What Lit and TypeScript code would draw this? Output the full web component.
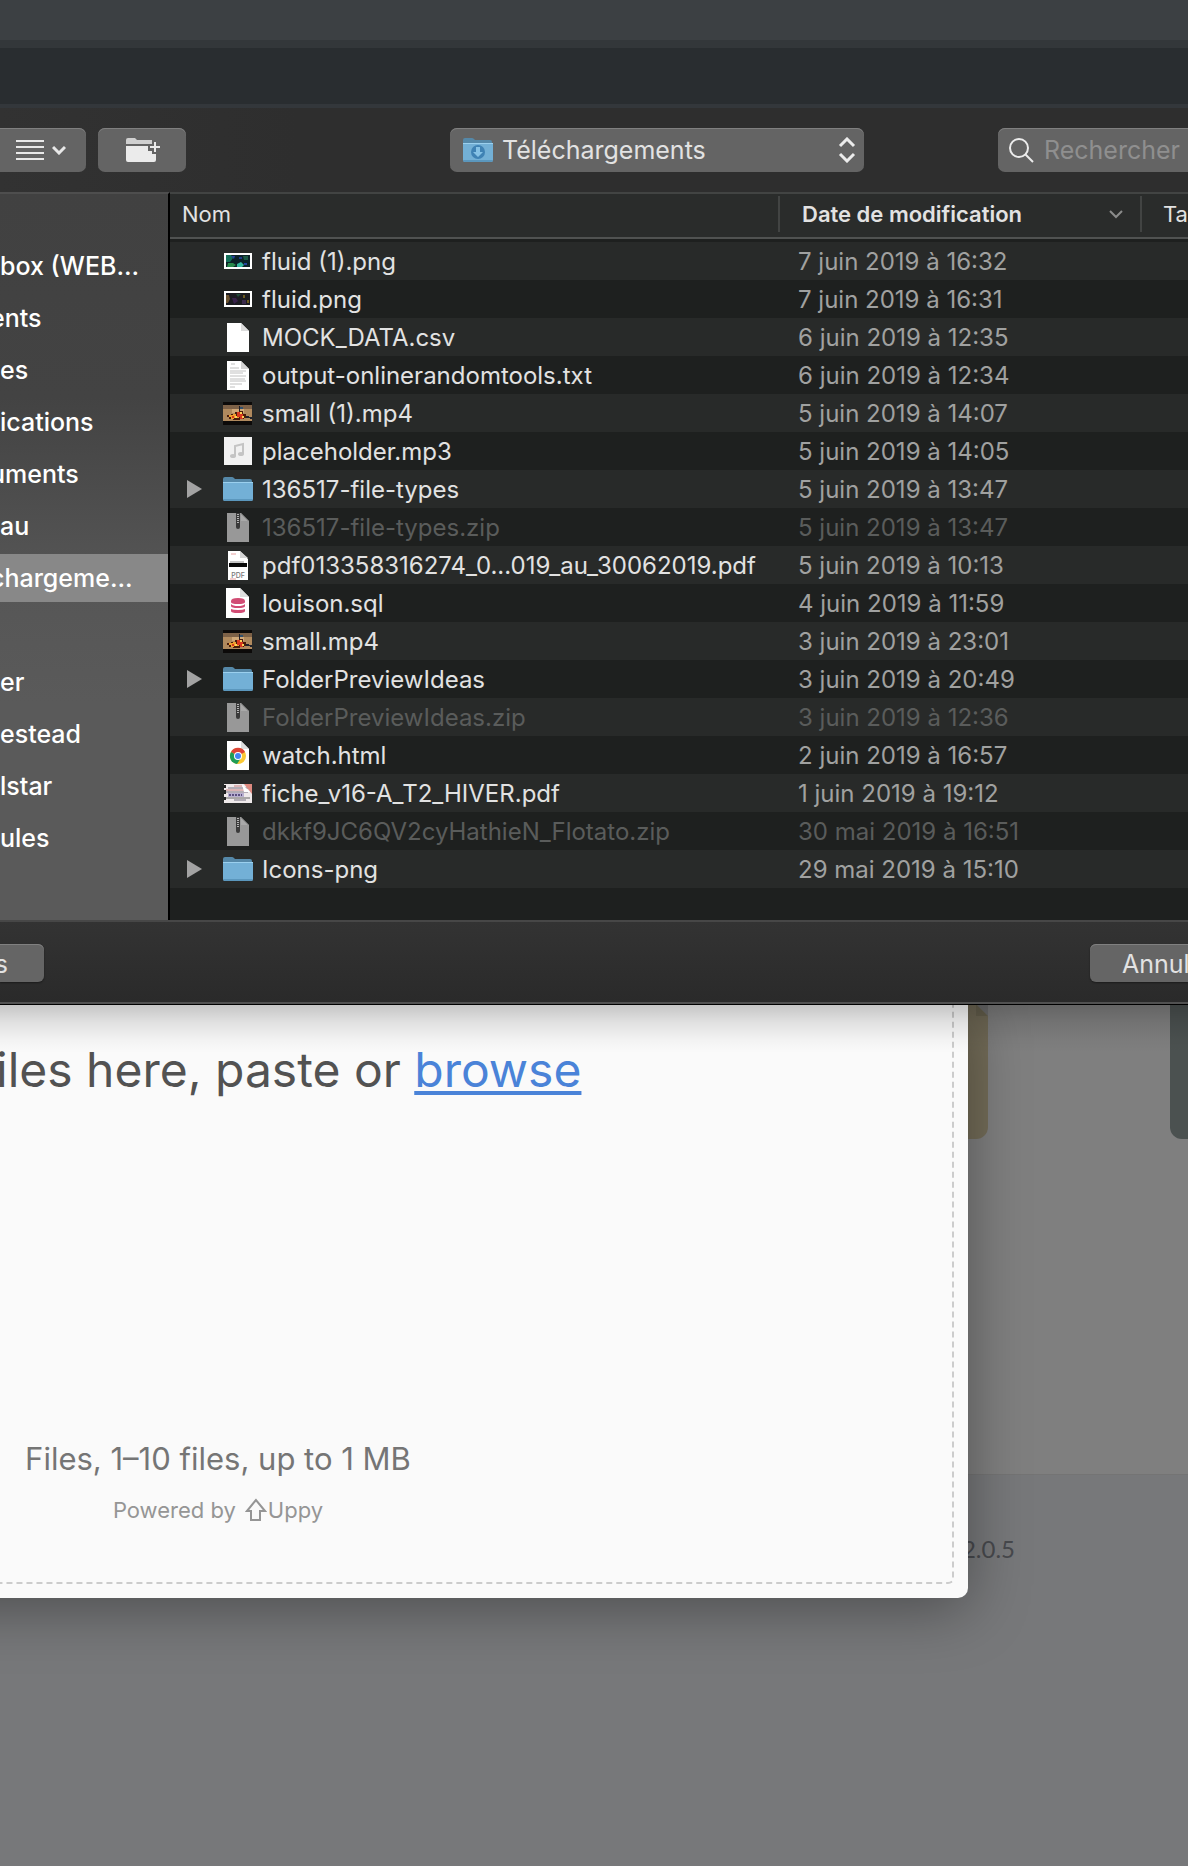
import { LitElement, html, css, svg } from "lit";
import { customElement } from "lit/decorators.js";
import { classMap } from "lit/directives/class-map.js";

type Kind = "fluidA" | "fluidB" | "blank" | "text" | "video" | "audio" | "folder" | "zip" | "pdf" | "sql" | "html" | "scan";

interface Entry {
  kind: Kind;
  name: string;
  date: string;
}

interface Place {
  label: string;
  bleed?: boolean;
  current?: boolean;
}

const FILES: Entry[] = [
  { kind: "fluidA", name: "fluid (1).png", date: "7 juin 2019 à 16:32" },
  { kind: "fluidB", name: "fluid.png", date: "7 juin 2019 à 16:31" },
  { kind: "blank", name: "MOCK_DATA.csv", date: "6 juin 2019 à 12:35" },
  { kind: "text", name: "output-onlinerandomtools.txt", date: "6 juin 2019 à 12:34" },
  { kind: "video", name: "small (1).mp4", date: "5 juin 2019 à 14:07" },
  { kind: "audio", name: "placeholder.mp3", date: "5 juin 2019 à 14:05" },
  { kind: "folder", name: "136517-file-types", date: "5 juin 2019 à 13:47" },
  { kind: "zip", name: "136517-file-types.zip", date: "5 juin 2019 à 13:47" },
  { kind: "pdf", name: "pdf013358316274_0...019_au_30062019.pdf", date: "5 juin 2019 à 10:13" },
  { kind: "sql", name: "louison.sql", date: "4 juin 2019 à 11:59" },
  { kind: "video", name: "small.mp4", date: "3 juin 2019 à 23:01" },
  { kind: "folder", name: "FolderPreviewIdeas", date: "3 juin 2019 à 20:49" },
  { kind: "zip", name: "FolderPreviewIdeas.zip", date: "3 juin 2019 à 12:36" },
  { kind: "html", name: "watch.html", date: "2 juin 2019 à 16:57" },
  { kind: "scan", name: "fiche_v16-A_T2_HIVER.pdf", date: "1 juin 2019 à 19:12" },
  { kind: "zip", name: "dkkf9JC6QV2cyHathieN_Flotato.zip", date: "30 mai 2019 à 16:51" },
  { kind: "folder", name: "Icons-png", date: "29 mai 2019 à 15:10" },
];

const PLACES: Place[][] = [
  [
    { label: "box (WEB..." },
    { label: "ents", bleed: true },
    { label: "es" },
    { label: "ications" },
    { label: "uments", bleed: true },
    { label: "au" },
    { label: "chargeme...", bleed: true, current: true },
  ],
  [{ label: "er" }, { label: "estead" }, { label: "lstar" }, { label: "ules" }],
];

const page = (fill: string, flap: string) => svg`
  <path d="M5 2h14l8 8v21H5z" fill=${fill}/>
  <path d="M19 2v8h8z" fill=${flap}/>`;

const folderShape = svg`
  <path d="M1 7V6q0-2 2-2h7q1 0 2 1l1 1h15q2 0 2 2v3H1z" fill="#5588a8"/>
  <path d="M1 9h30v17q0 2-2 2H3q-2 0-2-2z" fill="#73b0d6"/>
  <path d="M1 9h30v1H1z" fill="#9bd0ee"/>
  <path d="M1 26h30q0 2-2 2H3q-2 0-2-2z" fill="#5b97bd"/>`;

const videoShape = svg`
  <path d="M1 5h29v23H1z" fill="#0c0a09"/>
  <path d="M1 8h29v16H1z" fill="#b08a5e"/>
  <path d="M1 8h29v4H1z" fill="#7d6147"/>
  <path d="M10 12h12v4H10z" fill="#d0a878"/>
  <path d="M5 18h4v-1h4v-2h4v-1h4v3h3v3h3v1h-5v1h-4v1h-7v-1H7v-2H5z" fill="#4a1c0c"/>
  <path d="M7 18h4v-1h3v2h3v2h-5v1H9v-2H7z" fill="#f0a030"/>
  <path d="M15 15h3v2h3v5h-3v-2h-3zM10 19h2v2h-2z" fill="#d9381e"/>
  <path d="M18 15h2v2h-2zM13 19h2v2h-2zM20 19h2v2h-2z" fill="#ffd257"/>
  <path d="M17 9h1v5h-1zM24 19h3v1h3v2h-2v-1h-4z" fill="#20222c"/>
  <path d="M18 10h3v2h-3z" fill="#31506e"/>`;

const ART: Record<Kind, unknown> = {
  folder: folderShape,
  video: videoShape,
  fluidA: svg`
    <path d="M2 8h28v16H2z" fill="#fff"/>
    <path d="M4 10h24v12H4z" fill="#0c2228"/>
    <path d="M4 10h5l2 3-3 4H4z" fill="#15705a"/>
    <path d="M6 18h5l3 2-3 2H5z" fill="#2a8a4c"/>
    <path d="M15 19l4-2 3 3-2 2h-5z" fill="#34b8a0"/>
    <path d="M9 11h4l-1 3zM22 18h3v2h-3z" fill="#2444a0"/>
    <path d="M21 11h5v4h-4z" fill="#1d5a46"/>
    <path d="M17 12h3v2h-3z" fill="#1f3c8c"/>`,
  fluidB: svg`
    <path d="M2 8h28v16H2z" fill="#fff"/>
    <path d="M4 10h24v12H4z" fill="#1a1a20"/>
    <path d="M4 12h3l1 4-2 4H4z" fill="#6a5230"/>
    <path d="M10 15h4l2 3-4 3z" fill="#37204a"/>
    <path d="M14 11h5l-3 3z" fill="#214a38"/>
    <path d="M21 12h2v3h-2zM25 17h2v3h-2z" fill="#6a5a20"/>
    <path d="M20 17h4v4h-4z" fill="#3a2a4c"/>`,
  blank: page("#fff", "#dcdcdc"),
  text: svg`${page("#fff", "#d4d4d4")}
    <path d="M9 5h4M8 9h9M8 12h16M8 14h13M8 17h16M8 20h15M8 22h16M8 25h12M8 28h5" stroke="#c0c0c0" stroke-width="1"/>`,
  audio: svg`
    <path d="M2 2h28v28H2z" fill="#f1f1f1"/>
    <path d="M13 21v-10l8-2v10" fill="none" stroke="#c4c4c4" stroke-width="2"/>
    <ellipse cx="11" cy="21" rx="3" ry="2" fill="#c4c4c4"/>
    <ellipse cx="19" cy="19" rx="3" ry="2" fill="#c4c4c4"/>`,
  zip: svg`${page("#989898", "#7c7c7c")}
    <path d="M14 2h4v14q0 2-2 2t-2-2z" fill="#3a3a3a"/>
    <path d="M16 3v10" stroke="#b4b4b4" stroke-width="2" stroke-dasharray="1 1"/>
    <path d="M19 3l7 7h-7z" fill="#a9a9a9"/>`,
  pdf: svg`
    <path d="M6 2h12l8 8v21H6z" fill="#fff"/>
    <path d="M18 2v7h8z" fill="#d6d6d6"/>
    <path d="M9 5h5" stroke="#e6a0a0"/>
    <path d="M7 14h18v4H7z" fill="#0a0a0a"/>
    <path d="M8 13h14" stroke="#8d8d8d"/>
    <path d="M8 30h6" stroke="#e69a9a"/>
    <text x="16" y="29" text-anchor="middle" font-size="7" font-weight="500" fill="#777">PDF</text>`,
  sql: svg`
    <path d="M4 1h14l9 9v21H4z" fill="#fff"/>
    <path d="M18 1v9h9z" fill="#dedede"/>
    <path d="M9 14q0-3 7-3t7 3v1q0 2-7 2t-7-2z" fill="#d14c74"/>
    <path d="M9 17q2 2 7 2t7-2v2q0 2-7 2t-7-2z" fill="#d14c74"/>
    <path d="M9 22q2 1 7 1t7-1v2q0 2-7 2t-7-2z" fill="#d14c74"/>`,
  html: svg`${page("#fff", "#dcdcdc")}
    <circle cx="16" cy="17" r="8" fill="#fbc934"/>
    <path d="M16 17L9 13a8 8 0 0 1 14 0z" fill="#dc4437"/>
    <path d="M9 13a8 8 0 0 0 6 12l4-6-3-2z" fill="#1f9d58"/>
    <circle cx="16" cy="17" r="4" fill="#fff"/>
    <circle cx="16" cy="17" r="3" fill="#4284f3"/>`,
  scan: svg`
    <path d="M2 7h28v19H2z" fill="#efe9ea"/>
    <path d="M12 9h8M4 13h20" stroke="#c98080" stroke-width="1"/>
    <path d="M6 11h20M4 15h22M12 23h12" stroke="#777080" stroke-width="1"/>
    <path d="M6 16h16v4H6z" fill="#b9b0d0"/>
    <path d="M7 18h13" stroke="#5d5080" stroke-width="2" stroke-dasharray="2 1"/>
    <path d="M2 8h2v3H2zM2 13h2v4H2zM2 20h2v3H2z" fill="#222"/>
    <path d="M22 7h8v10z" fill="#dd8a80"/>
    <path d="M20 7l8 8h-6z" fill="#fff"/>
    <path d="M4 21h24" stroke="#666"/>`,
};

const icon = (kind: Kind) => html`<svg class="icon" viewBox="0 0 32 32" aria-hidden="true">${ART[kind]}</svg>`;

@customElement("app-root")
export class AppRoot extends LitElement {
  static styles = css`
    :host {
      display: block;
      font-family: Inter, "Liberation Sans", sans-serif;
      color: #e2e2e2;
    }
    * { box-sizing: border-box; }
    button, input, select { font: inherit; color: inherit; border: 0; margin: 0; padding: 0; }
    .screen { display: flex; flex-direction: column; min-height: 100vh; overflow: hidden; }
    .tabs { height: 48px; background: #3c4043; border-bottom: 8px solid #33373a; }
    .address { height: 60px; background: #292d30; border-bottom: 4px solid #33373b; }

    .dialog {
      position: relative;
      z-index: 2;
      background: #2e2e2e;
      border-bottom: 1px solid #000;
    }
    .dialog::after {
      content: "";
      position: absolute;
      top: 100%;
      left: 0;
      right: 0;
      margin-top: 1px;
      height: 48px;
      pointer-events: none;
      background: linear-gradient(rgba(0, 0, 0, 0.21), rgba(0, 0, 0, 0.1) 36%, rgba(0, 0, 0, 0.03) 72%, transparent);
    }
    .toolbar {
      display: flex;
      align-items: center;
      height: 84px;
      background: linear-gradient(90deg, #323232, #2e2e2e 25%);
    }
    .chip {
      display: flex;
      align-items: center;
      flex: none;
      height: 44px;
      border-radius: 7px;
      background: #646464;
      box-shadow: inset 0 1px #808080;
      font-size: 25px;
    }
    .view { width: 86px; padding-left: 15px; gap: 7px; border-radius: 0 7px 7px 0; }
    .create { width: 88px; margin-left: 12px; justify-content: center; }
    .before { flex: 264 1 0; }
    .after { flex: 134 1 0; }
    .location { width: 414px; padding: 0 8px 0 12px; gap: 8px; }
    .location select {
      flex: 1;
      min-width: 0;
      height: 44px;
      appearance: none;
      background: transparent;
      outline: none;
    }
    .search { width: 190px; padding-left: 10px; gap: 10px; border-radius: 7px 0 0 7px; }
    .search input { flex: 1; min-width: 0; height: 44px; background: transparent; outline: none; }
    .search input::placeholder { color: #8f8f8f; opacity: 1; }
    .icon { width: 32px; height: 32px; flex: none; display: block; }
    .glyph { flex: none; display: block; }

    .body { display: flex; }
    .sidebar {
      flex: none;
      width: 170px;
      overflow: hidden;
      padding-top: 48px;
      border-top: 2px solid #4e4e4e;
      border-right: 2px solid #000;
      background: linear-gradient(#414141, #434343 28%, #565656 54%, #5a5a5a 70%, #5a5a5a);
    }
    .places { list-style: none; margin: 0 0 56px; padding: 0; display: grid; gap: 4px; }
    .places:last-child { margin-bottom: 0; }
    .place {
      display: block;
      height: 48px;
      line-height: 48px;
      white-space: nowrap;
      font-size: 25px;
      font-weight: 500;
      color: #fff;
      text-decoration: none;
    }
    .place.bleed { text-indent: -10px; }
    .place.current { background: #888; }
    .listing {
      flex: 1;
      min-width: 0;
      background: #1e201f;
      border-top: 2px solid #424443;
      padding-bottom: 32px;
    }
    table { width: 100%; table-layout: fixed; border-collapse: collapse; }
    .col-date { width: 362px; }
    .col-tags { width: 46px; }
    th {
      height: 44px;
      padding: 1px 0 5px;
      background: #2a2c2b;
      text-align: left;
      font-size: 22px;
      font-weight: 400;
      white-space: nowrap;
    }
    thead { border-bottom: 2px solid #505251; }
    .head {
      display: flex;
      align-items: center;
      justify-content: space-between;
      height: 36px;
      padding-left: 12px;
      border-right: 2px solid #424443;
    }
    .head-date { padding: 0 16px 0 22px; font-weight: 600; }
    .head-tags { padding-left: 21px; border: 0; }
    .spacer td { height: 4px; padding: 0; }
    .row td { height: 38px; padding: 0; font-size: 24px; line-height: 36px; white-space: nowrap; }
    .row:nth-child(even) td { background: #282a29; }
    .row .date { padding: 2px 0 0 18px; color: #a0a1a0; }
    .row.off td { color: #5a5c5b; }
    .file { display: flex; align-items: center; height: 38px; padding-left: 16px; }
    .disclose { width: 36px; height: 38px; flex: none; background: none; }
    .label { padding: 2px 0 0 8px; }

    .actions {
      display: flex;
      align-items: center;
      justify-content: space-between;
      height: 84px;
      padding-top: 2px;
      border-top: 2px solid #474747;
      border-bottom: 2px solid #515151;
      background: linear-gradient(#333, #2a2a2a);
    }
    .action {
      height: 38px;
      padding-top: 2px;
      background: #656565;
      box-shadow: inset 0 1px #808080, 0 1px 2px rgba(0, 0, 0, 0.4);
      font-size: 25px;
      line-height: 36px;
      white-space: nowrap;
    }
    .options { width: 44px; padding-right: 36px; border-radius: 0 6px 6px 0; display: flex; justify-content: flex-end; }
    .cancel { width: 98px; padding-left: 32px; border-radius: 6px 0 0 6px; text-align: left; }

    .workspace { position: relative; flex: 1; display: flex; flex-direction: column; background: #77787a; }
    .cards {
      display: flex;
      justify-content: flex-end;
      gap: 182px;
      padding-bottom: 335px;
      background: #7f7f7f;
      border-bottom: 1px solid #747474;
    }
    .card { height: 134px; }
    .tan { width: 182px; background: #736c58; border-radius: 0 0 12px 12px; display: flex; justify-content: flex-end; overflow: hidden; }
    .slate { width: 18px; background: #4b5150; border-radius: 0 0 0 12px; }
    .version {
      margin: 0;
      padding: 60px 173px 0 0;
      text-align: right;
      font-size: 24px;
      line-height: 28px;
      font-family: Lato, "Open Sans", sans-serif;
      color: #47494d;
    }
    .modal {
      position: absolute;
      top: 0;
      left: -80px;
      right: 220px;
      height: 593px;
      padding: 0 14px 14px 80px;
      border-radius: 0 0 10px 0;
      background: #fafafa;
      box-shadow: 0 10px 60px rgba(0, 0, 0, 0.36);
    }
    .drop {
      display: flex;
      flex-direction: column;
      justify-content: space-between;
      height: 100%;
      padding: 34px 0 58px;
      border: 2px dashed #ccc;
      border-width: 0 2px 2px 0;
      border-radius: 0 0 6px 0;
    }
    .title {
      margin: 0;
      text-indent: -4px;
      font-size: 48px;
      line-height: 62px;
      font-weight: 400;
      color: #525252;
      white-space: nowrap;
    }
    .title a { color: #4a83d8; text-decoration: underline; text-decoration-thickness: 4px; text-underline-offset: 4px; text-decoration-skip-ink: none; }
    .notes { width: 436px; text-align: center; white-space: nowrap; }
    .limit { margin: 0 0 17px; font-size: 31px; line-height: 40px; color: #757575; }
    .powered { margin: 0; display: flex; justify-content: center; align-items: center; font-size: 22px; line-height: 28px; color: #959595; }
    .powered a { display: flex; align-items: center; gap: 1px; margin-left: 9px; color: inherit; text-decoration: none; }
  `;

  private row(f: Entry) {
    return html`
      <tr class=${classMap({ row: true, off: f.kind === "zip" })}>
        <td>
          <div class="file">
            ${f.kind === "folder"
              ? html`<button class="disclose" aria-label="Développer">
                  <svg class="glyph" width="18" height="20" viewBox="0 0 18 20"><path d="M1 1l15 9-15 9z" fill="#a3a3a3" /></svg>
                </button>`
              : html`<span class="disclose"></span>`}
            ${icon(f.kind)}<span class="label">${f.name}</span>
          </div>
        </td>
        <td class="date">${f.date}</td>
        <td></td>
      </tr>`;
  }

  private place(p: Place) {
    return html`<li>
      <a href="#" class=${classMap({ place: true, bleed: !!p.bleed, current: !!p.current })}>${p.label}</a>
    </li>`;
  }

  render() {
    return html`
      <div class="screen">
        <div class="tabs"></div>
        <div class="address"></div>
        <section class="dialog">
          <div class="toolbar">
            <button class="chip view" aria-label="Présentation">
              <svg class="glyph" width="30" height="24" viewBox="0 0 30 24">
                <path d="M1 3h28M1 9h28M1 15h28M1 21h28" stroke="#e8e8e8" stroke-width="2" />
              </svg>
              <svg class="glyph" width="14" height="10" viewBox="0 0 14 10">
                <path d="M1 2l6 6 6-6" fill="none" stroke="#e8e8e8" stroke-width="3" />
              </svg>
            </button>
            <button class="chip create" aria-label="Nouveau dossier">
              <svg class="glyph" width="36" height="32" viewBox="0 0 36 32">
                <path d="M2 11V6q0-2 2-2h7l2 2h15v4H2z" fill="#d0d0d0" />
                <path d="M2 12h22v5h4v3h4v6q0 2-2 2H4q-2 0-2-2z" fill="#ebebeb" />
                <path d="M31 6v14M24 13h12" stroke="#646464" stroke-width="5" />
                <path d="M31 8v10M26 13h10" stroke="#ebebeb" stroke-width="2" />
              </svg>
            </button>
            <span class="before"></span>
            <div class="chip location">
              <svg class="icon" viewBox="0 0 32 32" aria-hidden="true">
                ${folderShape}
                <circle cx="16" cy="18" r="7" fill="#3f82b4" />
                <path d="M14 13h4v5h3l-5 5-5-5h3z" fill="#86c2e6" />
              </svg>
              <select aria-label="Emplacement"><option>Téléchargements</option></select>
              <svg class="glyph" width="18" height="26" viewBox="0 0 18 26">
                <path d="M2 9l7-7 7 7M2 17l7 7 7-7" fill="none" stroke="#ececec" stroke-width="3" />
              </svg>
            </div>
            <span class="after"></span>
            <div class="chip search">
              <svg class="glyph" width="26" height="26" viewBox="0 0 26 26" aria-hidden="true">
                <circle cx="11" cy="11" r="9" fill="none" stroke="#ececec" stroke-width="2" />
                <path d="M17 17l8 8" stroke="#ececec" stroke-width="2" />
              </svg>
              <input type="text" placeholder="Rechercher" aria-label="Rechercher" />
            </div>
          </div>
          <div class="body">
            <nav class="sidebar">
              ${PLACES.map((group) => html`<ul class="places">${group.map((p) => this.place(p))}</ul>`)}
            </nav>
            <div class="listing">
              <table>
                <colgroup><col /><col class="col-date" /><col class="col-tags" /></colgroup>
                <thead>
                  <tr>
                    <th><div class="head">Nom</div></th>
                    <th>
                      <div class="head head-date">
                        Date de modification
                        <svg class="glyph" width="16" height="10" viewBox="0 0 16 10">
                          <path d="M2 2l6 6 6-6" fill="none" stroke="#8b8c8b" stroke-width="2" />
                        </svg>
                      </div>
                    </th>
                    <th><div class="head head-tags">Ta</div></th>
                  </tr>
                </thead>
                <tbody>
                  <tr class="spacer"><td colspan="3"></td></tr>
                  ${FILES.map((f) => this.row(f))}
                </tbody>
              </table>
            </div>
          </div>
          <div class="actions">
            <button class="action options">s</button>
            <button class="action cancel">Annul</button>
          </div>
        </section>
        <main class="workspace">
          <div class="cards">
            <div class="card tan">
              <svg class="glyph" width="12" height="12" viewBox="0 0 12 12"><path d="M0 0h1l11 11H0z" fill="#68624f" /><path d="M1 0h11v11z" fill="#6f6f6f" /></svg>
            </div>
            <div class="card slate"></div>
          </div>
          <p class="version">2.0.5</p>
          <section class="modal">
            <div class="drop">
              <h1 class="title">iles here, paste or <a href="#">browse</a></h1>
              <div class="notes">
                <p class="limit">Files, 1–10 files, up to 1 MB</p>
                <p class="powered">
                  Powered by
                  <a href="#">
                    <svg class="glyph" width="22" height="24" viewBox="0 0 22 24">
                      <path d="M11 2L2 13h4v9h9v-9h5z" fill="none" stroke="#959595" stroke-width="2" />
                    </svg>Uppy
                  </a>
                </p>
              </div>
            </div>
          </section>
        </main>
      </div>
    `;
  }
}
